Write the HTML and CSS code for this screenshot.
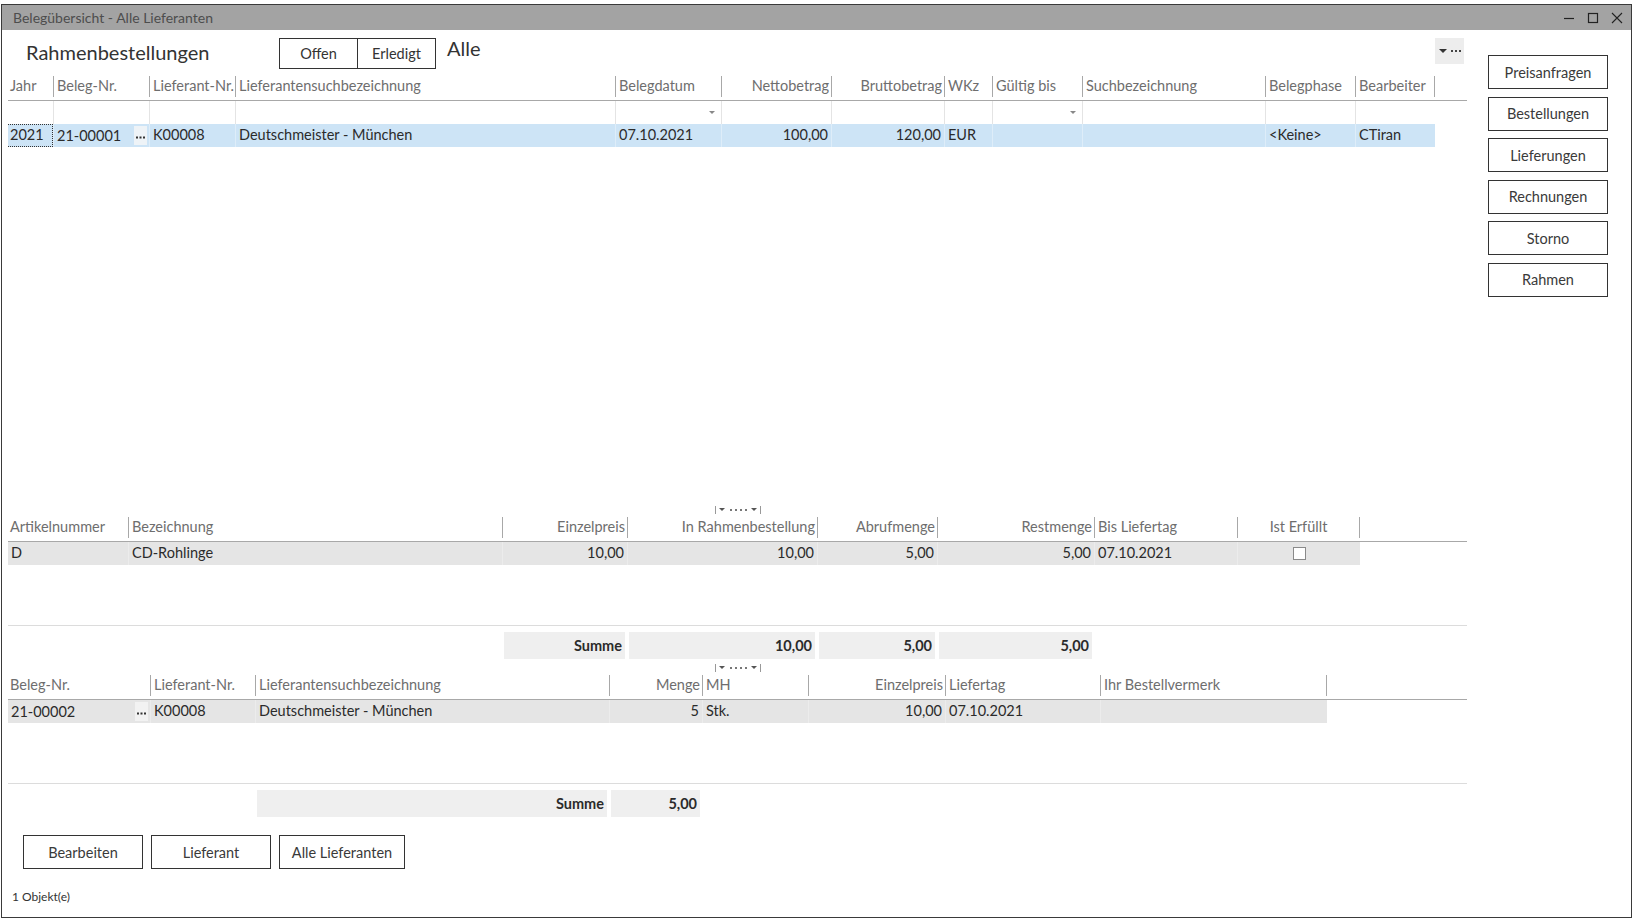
FILE: index.html
```html
<!DOCTYPE html>
<html lang="de">
<head>
<meta charset="utf-8">
<title>Belegübersicht - Alle Lieferanten</title>
<link rel="stylesheet" href="styles.css">
</head>
<body>
<div class="window">
  <div class="titlebar">
    <span class="title">Belegübersicht - Alle Lieferanten</span>
    <div class="winctl">
      <svg width="12" height="12" viewBox="0 0 12 12"><path d="M1 6.5H11" stroke="#222" stroke-width="1.2" fill="none"/></svg>
      <svg width="12" height="12" viewBox="0 0 12 12"><rect x="1.5" y="1.5" width="9" height="9" stroke="#222" stroke-width="1.2" fill="none"/></svg>
      <svg width="12" height="12" viewBox="0 0 12 12"><path d="M1 1L11 11M11 1L1 11" stroke="#222" stroke-width="1.1" fill="none"/></svg>
    </div>
  </div>
  <div class="content">
    <div class="main">
      <div class="toolbar">
        <h1 class="heading">Rahmenbestellungen</h1>
        <div class="seg"><button class="seg-btn">Offen</button><button class="seg-btn">Erledigt</button></div>
        <span class="alle">Alle</span>
        <div class="grid-menu">
          <svg width="8" height="6" viewBox="0 0 8 6"><path d="M0 1H8L4 5Z" fill="#333"/></svg>
          <svg width="10" height="4" viewBox="0 0 10 4"><rect x="0" y="1" width="2" height="2" fill="#444"/><rect x="4" y="1" width="2" height="2" fill="#444"/><rect x="8" y="1" width="2" height="2" fill="#444"/></svg>
        </div>
      </div>

      <div class="panel p1">
        <div class="r hdr t1">
          <div class="hc">Jahr</div>
          <div class="hc">Beleg-Nr.</div>
          <div class="hc">Lieferant-Nr.</div>
          <div class="hc">Lieferantensuchbezeichnung</div>
          <div class="hc">Belegdatum</div>
          <div class="hc num">Nettobetrag</div>
          <div class="hc num">Bruttobetrag</div>
          <div class="hc">WKz</div>
          <div class="hc">Gültig bis</div>
          <div class="hc">Suchbezeichnung</div>
          <div class="hc">Belegphase</div>
          <div class="hc last">Bearbeiter</div>
        </div>
        <div class="r filter t1">
          <div class="fc"></div>
          <div class="fc"></div>
          <div class="fc"></div>
          <div class="fc"></div>
          <div class="fc drop"><span class="caret"></span></div>
          <div class="fc"></div>
          <div class="fc"></div>
          <div class="fc"></div>
          <div class="fc drop"><span class="caret"></span></div>
          <div class="fc"></div>
          <div class="fc"></div>
          <div class="fc"></div>
        </div>
        <div class="r data sel t1">
          <div class="dc focus">2021</div>
          <div class="dc split">21-00001<span class="ell"><svg width="9" height="3" viewBox="0 0 9 3"><rect x="0" y="0.5" width="2" height="2" fill="#333"/><rect x="3.5" y="0.5" width="2" height="2" fill="#333"/><rect x="7" y="0.5" width="2" height="2" fill="#333"/></svg></span></div>
          <div class="dc">K00008</div>
          <div class="dc">Deutschmeister - München</div>
          <div class="dc">07.10.2021</div>
          <div class="dc num">100,00</div>
          <div class="dc num">120,00</div>
          <div class="dc">EUR</div>
          <div class="dc"></div>
          <div class="dc"></div>
          <div class="dc">&lt;Keine&gt;</div>
          <div class="dc">CTiran</div>
        </div>
      </div>

      <div class="splitter s1">
        <svg width="46" height="8" viewBox="0 0 46 8"><path d="M0.5 0V8M45.5 0V8" stroke="#999" stroke-width="1"/><path d="M4 2H10L7 5Z" fill="#555"/><rect x="15" y="3" width="2" height="2" fill="#777"/><rect x="20" y="3" width="2" height="2" fill="#777"/><rect x="25" y="3" width="2" height="2" fill="#777"/><rect x="30" y="3" width="2" height="2" fill="#777"/><path d="M36 2H42L39 5Z" fill="#555"/></svg>
      </div>

      <div class="panel p2">
        <div class="r hdr t2">
          <div class="hc">Artikelnummer</div>
          <div class="hc">Bezeichnung</div>
          <div class="hc num">Einzelpreis</div>
          <div class="hc num">In Rahmenbestellung</div>
          <div class="hc num">Abrufmenge</div>
          <div class="hc num">Restmenge</div>
          <div class="hc">Bis Liefertag</div>
          <div class="hc center last">Ist Erfüllt</div>
        </div>
        <div class="r data grey t2">
          <div class="dc">D</div>
          <div class="dc">CD-Rohlinge</div>
          <div class="dc num">10,00</div>
          <div class="dc num">10,00</div>
          <div class="dc num">5,00</div>
          <div class="dc num">5,00</div>
          <div class="dc">07.10.2021</div>
          <div class="dc center"><span class="check"></span></div>
        </div>
      </div>

      <div class="r sum t2">
        <div class="sc c3">Summe</div>
        <div class="sc">10,00</div>
        <div class="sc">5,00</div>
        <div class="sc">5,00</div>
      </div>

      <div class="splitter s2">
        <svg width="46" height="8" viewBox="0 0 46 8"><path d="M0.5 0V8M45.5 0V8" stroke="#999" stroke-width="1"/><path d="M4 2H10L7 5Z" fill="#555"/><rect x="15" y="3" width="2" height="2" fill="#777"/><rect x="20" y="3" width="2" height="2" fill="#777"/><rect x="25" y="3" width="2" height="2" fill="#777"/><rect x="30" y="3" width="2" height="2" fill="#777"/><path d="M36 2H42L39 5Z" fill="#555"/></svg>
      </div>

      <div class="panel p3">
        <div class="r hdr t3">
          <div class="hc">Beleg-Nr.</div>
          <div class="hc">Lieferant-Nr.</div>
          <div class="hc">Lieferantensuchbezeichnung</div>
          <div class="hc num">Menge</div>
          <div class="hc">MH</div>
          <div class="hc num">Einzelpreis</div>
          <div class="hc">Liefertag</div>
          <div class="hc last">Ihr Bestellvermerk</div>
        </div>
        <div class="r data grey t3">
          <div class="dc split">21-00002<span class="ell"><svg width="9" height="3" viewBox="0 0 9 3"><rect x="0" y="0.5" width="2" height="2" fill="#333"/><rect x="3.5" y="0.5" width="2" height="2" fill="#333"/><rect x="7" y="0.5" width="2" height="2" fill="#333"/></svg></span></div>
          <div class="dc">K00008</div>
          <div class="dc">Deutschmeister - München</div>
          <div class="dc num">5</div>
          <div class="dc">Stk.</div>
          <div class="dc num">10,00</div>
          <div class="dc">07.10.2021</div>
          <div class="dc"></div>
        </div>
      </div>

      <div class="r sum t3">
        <div class="sc c3">Summe</div>
        <div class="sc">5,00</div>
      </div>

      <div class="btnrow">
        <button class="btn bb">Bearbeiten</button>
        <button class="btn bb">Lieferant</button>
        <button class="btn bb wide">Alle Lieferanten</button>
      </div>
      <div class="status">1 Objekt(e)</div>
    </div>

    <div class="side">
      <button class="btn side-btn">Preisanfragen</button>
      <button class="btn side-btn">Bestellungen</button>
      <button class="btn side-btn">Lieferungen</button>
      <button class="btn side-btn">Rechnungen</button>
      <button class="btn side-btn">Storno</button>
      <button class="btn side-btn">Rahmen</button>
    </div>
  </div>
</div>
</body>
</html>
```

FILE: styles.css
```css
* { box-sizing: border-box; }
html, body { margin: 0; padding: 0; background: #fff; }
body {
  font-family: "Lato", "Open Sans", sans-serif;
  font-size: 14.5px;
  color: #2b2b2b;
  width: 1637px;
  height: 920px;
  overflow: hidden;
}
button { font-family: inherit; }

.window {
  margin: 4px 0 0 1px;
  width: 1631px;
  height: 914px;
  border: 1px solid #3a3a3a;
  display: flex;
  flex-direction: column;
  background: #fff;
}
.titlebar {
  height: 25px;
  background: #a3a3a3;
  display: flex;
  align-items: center;
  justify-content: space-between;
  padding: 0 8px 0 11px;
  flex: none;
}
.title { color: #4d4d4d; font-size: 14px; }
.winctl { display: flex; gap: 12px; align-items: center; }

.content { flex: 1; display: flex; min-height: 0; }
.main {
  width: 1465px;
  padding-left: 6px;
  display: flex;
  flex-direction: column;
  flex: none;
}
.side {
  flex: 1;
  display: flex;
  flex-direction: column;
  padding: 25px 0 0 21px;
  gap: 7.5px;
}

.toolbar {
  height: 42px;
  display: flex;
  align-items: flex-start;
  flex: none;
}
.heading {
  margin: 10px 0 0 18px;
  font-size: 20px;
  font-weight: normal;
  color: #333;
  width: 253px;
  line-height: 24px;
}
.seg { display: flex; margin-top: 8px; }
.seg-btn {
  height: 31px;
  border: 1px solid #333;
  background: #fff;
  color: #333;
  font-size: 14.5px;
  padding: 0;
}
.seg-btn:first-child { width: 79px; }
.seg-btn + .seg-btn { width: 78px; border-left: none; }
.alle { margin: 6px 0 0 11px; font-size: 20px; color: #333; line-height: 24px; }
.grid-menu {
  margin: 8px 3px 0 auto;
  width: 29px;
  height: 26px;
  background: #ededed;
  display: flex;
  align-items: center;
  justify-content: center;
  gap: 4px;
}

/* tables */
.r { display: grid; }
.t1 { grid-template-columns: 45px 96px 86px 380px 106px 110px 113px 48px 90px 183px 90px 80px; }
.t2 { grid-template-columns: 120px 374px 125px 190px 120px 157px 143px 123px; }
.t3 { grid-template-columns: 142px 105px 354px 93px 106px 137px 155px 227px; }

.panel { flex: none; }
.p1 { height: 432px; }
.p2 { height: 110px; border-bottom: 1px solid #dcdcdc; }
.p3 { height: 110px; border-bottom: 1px solid #dcdcdc; }

.hdr {
  height: 29px;
  align-items: end;
  border-bottom: 1px solid #a8a8a8;
}
.p2 .hdr, .p3 .hdr { height: 26px; }
.hc {
  height: 21px;
  margin-bottom: 3px;
  line-height: 20px;
  padding: 0 3px;
  color: #6e6e6e;
  border-left: 1px solid #a8a8a8;
  white-space: nowrap;
  overflow: hidden;
}
.hc:first-child { border-left: none; padding-left: 2px; }
.hc.last { border-right: 1px solid #a8a8a8; }
.num { text-align: right; padding-right: 2px; }
.center { text-align: center; }

.filter { height: 23px; }
.fc { border-left: 1px solid #e4e4e4; }
.fc:first-child { border-left: none; }
.drop { display: flex; justify-content: flex-end; align-items: center; padding-right: 6px; }
.caret {
  width: 0; height: 0;
  border-left: 3px solid transparent;
  border-right: 3px solid transparent;
  border-top: 3px solid #888;
}

.data { height: 23px; width: max-content; }
.dc {
  line-height: 22px;
  padding: 0 3px;
  white-space: nowrap;
  border-left: 1px solid rgba(255,255,255,0.35);
  color: #2b2b2b;
}
.dc:first-child { border-left: none; }
.sel { background: #cde4f6; }
.grey { background: #e5e5e5; }
.grey .dc { border-left-color: #ececec; }
.focus { border: 1px dotted #333; line-height: 20px; padding-left: 2px; }
.split { display: flex; align-items: center; padding-right: 2px; }
.ell {
  margin-left: auto;
  width: 13px;
  height: 19px;
  background: #eef3f7;
  display: flex;
  align-items: center;
  justify-content: center;
  padding-top: 3px;
}
.grey .ell { background: #f2f2f2; }
.check {
  display: inline-block;
  width: 13px;
  height: 13px;
  border: 1px solid #8a8a8a;
  background: #fff;
  vertical-align: middle;
  margin-top: -2px;
}

.splitter {
  height: 12px;
  display: flex;
  justify-content: center;
  align-items: center;
  flex: none;
}
.s2 { height: 12px; margin-top: 3px; }

.sum { height: 27px; margin-top: 6px; flex: none; }
.sc {
  background: #efefef;
  margin: 0 2px;
  font-weight: bold;
  text-align: right;
  padding-right: 3px;
  line-height: 27px;
  color: #2b2b2b;
}
.c3 { grid-column: 3; }

.btnrow { display: flex; gap: 8px; margin: 18px 0 0 15px; flex: none; }
.btn {
  height: 34px;
  border: 1px solid #333;
  background: #fff;
  color: #3a3a3a;
  font-size: 14.5px;
  padding: 0;
}
.bb { width: 120px; }
.bb.wide { width: 126px; }
.side-btn { width: 120px; height: 34px; }
.status { margin: 20px 0 0 4px; font-size: 12px; color: #333; }
```
